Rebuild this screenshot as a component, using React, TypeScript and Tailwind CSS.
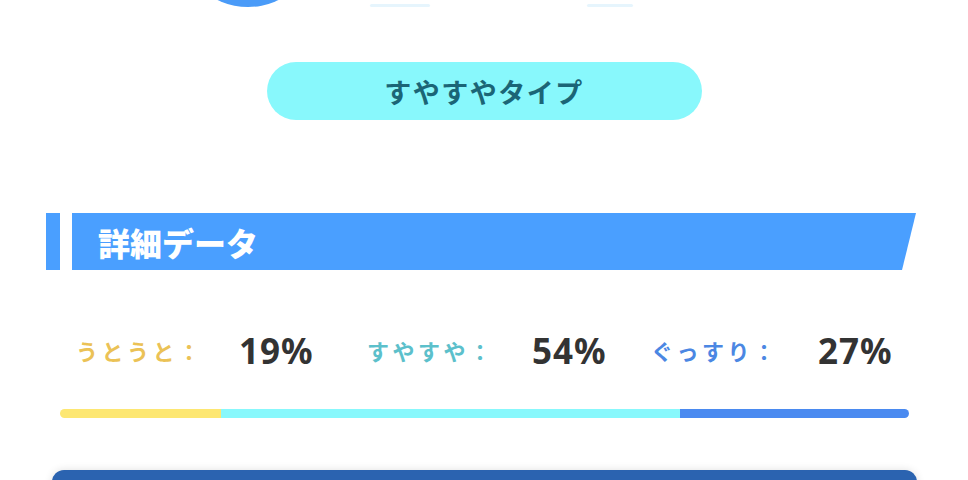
import React from 'react';

const stats = [
  { label: 'うとうと：', value: '19%', color: 'text-[#EBC256]', labelW: 'w-[163px]', valueW: 'w-[128px]' },
  { label: 'すやすや：', value: '54%', color: 'text-[#5CC0CB]', labelW: 'w-[165px]', valueW: 'w-[119px]' },
  { label: 'ぐっすり：', value: '27%', color: 'text-[#4B87E3]', labelW: 'w-[167px]', valueW: 'w-[80px]' },
];

export default function App() {
  return (
    <div className="w-[968px] h-[480px] overflow-hidden bg-white font-['Noto_Sans_CJK_JP',sans-serif]">
      {/* top of the previous block, cut off by the viewport */}
      <div className="h-[7px] overflow-hidden flex items-end">
        <div className="ml-[178px] w-[140px] h-[140px] shrink-0 rounded-full bg-[#4A9BF8]" />
        <div className="ml-[52px] w-[60px] h-[3px] rounded-full bg-[#E6F5FD]" />
        <div className="ml-[157px] w-[46px] h-[3px] rounded-full bg-[#E6F5FD]" />
      </div>

      <div className="mt-[55px] mx-auto w-[435px] h-[58px] rounded-full bg-[#88F8FC] flex items-center justify-center">
        <span className="text-[27px] font-bold text-[#1B6576] tracking-[1.5px] leading-none">すやすやタイプ</span>
      </div>

      <div className="mt-[93px] ml-[46px] flex gap-[12px] h-[57px]">
        <div className="w-[14px] bg-[#4A9FFF]" />
        <div className="w-[844px] bg-[#4A9FFF] [clip-path:polygon(0_0,100%_0,calc(100%-14px)_100%,0_100%)] flex items-center pl-[26px]">
          <span className="text-[32px] font-black text-white leading-none">詳細データ</span>
        </div>
      </div>

      <div className="mt-[62px] ml-[76px] flex items-center h-[36px]">
        {stats.map((s) => (
          <React.Fragment key={s.label}>
            <span className={`${s.labelW} ${s.color} text-[22px] font-bold tracking-[3.5px] leading-none`}>{s.label}</span>
            <span className={`${s.valueW} text-[35px] font-bold text-[#333333] leading-none font-['Noto_Sans',sans-serif] tracking-[1px]`}>{s.value}</span>
          </React.Fragment>
        ))}
      </div>

      <div className="mt-[41px] ml-[60px] w-[849px] h-[9px] rounded-full overflow-hidden flex">
        <div className="w-[161px] bg-[#FDE772]" />
        <div className="w-[459px] bg-[#88F8FC]" />
        <div className="flex-1 bg-[#4A8AF0]" />
      </div>

      <div className="mt-[52px] ml-[52px] w-[865px] h-[40px] rounded-t-[12px] bg-[#2B63B0] shadow-[0_0_8px_rgba(0,0,0,0.12)]" />
    </div>
  );
}
